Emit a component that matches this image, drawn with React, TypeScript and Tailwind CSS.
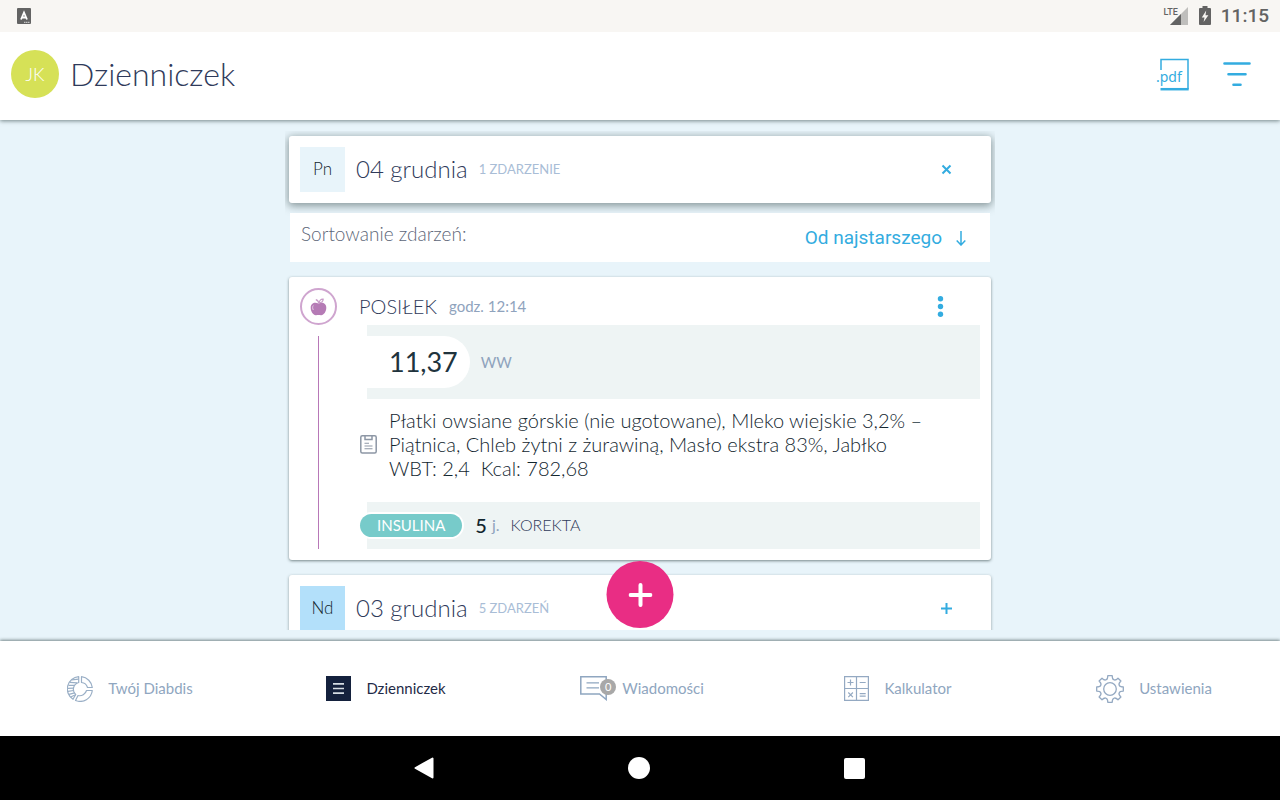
import type { ReactNode } from "react";
import clsx from "clsx";

/* ── Icons ── */
function KeyboardIcon() {
  return (
    <svg width="14" height="16" viewBox="0 0 14 16" aria-hidden="true">
      <rect width="14" height="16" rx="1" fill="#636363" />
      <path d="M4 11.500L7 4.500L10 11.500M5 9.500H9" fill="none" stroke="#fff" strokeWidth="1.800" />
      <path d="M7 14.300H13" stroke="#ddd" strokeWidth="1" strokeDasharray="1.500 .5" />
    </svg>
  );
}

function SignalIcon() {
  return (
    <svg width="18" height="18" viewBox="0 0 18 18" aria-hidden="true">
      <path d="M18 0V18H0Z" fill="#bfbebc" />
      <path d="M11 7V18H0Z" fill="#636363" />
    </svg>
  );
}

function BatteryIcon() {
  return (
    <svg width="12" height="19" viewBox="0 0 12 19" aria-hidden="true">
      <path d="M3.500 0H8.500V2H11Q12 2 12 3V18Q12 19 11 19H1Q0 19 0 18V3Q0 2 1 2H3.500Z" fill="#636363" />
      <path d="M7.200 4.500L2.800 11.500H5.500L4.600 16L9.400 9.200H6.500Z" fill="#f8f6f3" />
    </svg>
  );
}

function PdfIcon() {
  return (
    <svg width="33" height="33" viewBox="0 0 33 33" aria-hidden="true">
      <g fill="none" stroke="#33ace0">
        <path d="M5 12V1.500H32V31" strokeWidth="1.500" />
        <path d="M4.500 31.200H32.700" strokeWidth="2.500" />
      </g>
      <text x="0" y="24" fill="#33ace0" fontFamily="'Noto Sans', sans-serif" fontSize="14">.pdf</text>
    </svg>
  );
}

function FilterIcon() {
  return (
    <svg width="28" height="26" viewBox="0 0 28 26" fill="none" stroke="#33ace0" strokeWidth="2.600" strokeLinecap="round" aria-hidden="true">
      <path d="M1.500 2.500H26.500M5.500 13.200H22.500M10.500 23.700H17.500" />
    </svg>
  );
}

function AppleIcon() {
  return (
    <svg width="17" height="18" viewBox="0 0 17 18" aria-hidden="true">
      <path d="M8.500 5.500C5.500 3.800 .7 4.400 .7 9.800C.7 13.800 3.500 17.500 6 17.200C7.500 16.900 9.500 16.900 11 17.200C13.500 17.500 16.300 13.800 16.300 9.800C16.300 4.400 11.500 3.800 8.500 5.500Z" fill="#b57bb5" />
      <path d="M8.800 5.500C8.600 3.500 7.600 2.200 5.800 1.700M9.200 4.800C9.200 2.600 10.800 1 13.200 1.200C13 3.400 11.500 4.600 9.200 4.800Z" fill="none" stroke="#c89cc8" strokeWidth="1.200" />
      <path d="M3.300 7.500C2.300 8.800 2.600 10.800 3.300 12" fill="none" stroke="#e6cfe6" strokeWidth="1" />
    </svg>
  );
}

function NoteIcon() {
  return (
    <svg width="17" height="19" viewBox="0 0 17 19" fill="none" stroke="#8d97a5" aria-hidden="true">
      <rect x=".8" y=".8" width="15.400" height="17.200" rx="1.500" strokeWidth="1.500" />
      <path d="M5 1V4.500H12V1" strokeWidth="1.500" />
      <path d="M4.500 8.300H9M4.500 11H12.500M4.500 13.700H12.500" strokeWidth="1.100" />
    </svg>
  );
}

function WheelIcon() {
  return (
    <svg width="26" height="26" viewBox="0 0 26 26" fill="none" stroke="#9aafc6" strokeWidth="1.200" strokeLinejoin="round" aria-hidden="true">
      <path d="M14.500 .7A12.300 12.300 0 0 1 25.300 11.500H20.500A7 7 0 0 0 14.500 6.500Z" />
      <path d="M25.300 14.500A12.300 12.300 0 0 1 8.500 24.500L11 19.500A7 7 0 0 0 19.500 14.500Z" />
      <path d="M11.700 .7A12.300 12.300 0 0 0 6 23.300L8.700 18.500A7 7 0 0 1 11.700 6.500Z" />
      <path d="M5 3.800L11.500 3.200M2.800 6.300L10 6.800M1.500 9.300L7.600 9.300M.8 12.300L6.600 12.200M1 15.300L6.600 14.500M1.900 18.300L7.800 16.900M3.700 21L8.500 18.800" />
    </svg>
  );
}

function DiaryIcon() {
  return (
    <svg width="25" height="25" viewBox="0 0 25 25" aria-hidden="true">
      <rect width="25" height="25" fill="#14213d" />
      <path d="M7 7.800H18M7 12.500H18M7 17.200H18" stroke="#d5dde4" strokeWidth="1.700" />
    </svg>
  );
}

function MessageIcon() {
  return (
    <svg width="27" height="25" viewBox="0 0 27 25" fill="none" stroke="#8fa6c0" aria-hidden="true">
      <path d="M.8 .8H26.200V23.500L19.500 18H.8Z" strokeWidth="1.500" />
      <path d="M6.500 6.800H19M6.500 11.800H19" strokeWidth="1.300" />
    </svg>
  );
}

function CalculatorIcon() {
  return (
    <svg width="25" height="25" viewBox="0 0 25 25" fill="none" stroke="#94a9c2" strokeWidth="1.200" aria-hidden="true">
      <path d="M.6 .6H24.400V24.400H.6ZM12.500 .6V24.400M.6 12.500H24.400" />
      <path d="M3.500 6.500H9.500M6.500 3.500V9.500M15.700 6.500H21.700M4.300 16.500L8.900 21.100M8.900 16.500L4.300 21.100M15.700 17.600H21.700M15.700 20.200H21.700" />
    </svg>
  );
}

function GearIcon() {
  return (
    <svg width="28" height="28" viewBox="0 0 28 28" fill="none" stroke="#94a9c2" strokeWidth="1.300" strokeLinejoin="round" aria-hidden="true">
      <circle cx="14" cy="14" r="6.300" />
      <path d="M11.800 .7H16.200Q16.300 4.300 17.800 4.700Q19.600 5.700 22 3.200L24.900 6Q22.300 8.500 23.200 10.200Q23.700 11.800 27.300 11.900V16.100Q23.700 16.200 23.200 17.800Q22.300 19.500 24.900 22L22 24.800Q19.600 22.300 17.800 23.300Q16.300 23.700 16.200 27.300H11.800Q11.700 23.700 10.200 23.300Q8.400 22.300 6 24.800L3.100 22Q5.700 19.500 4.800 17.800Q4.300 16.200 .7 16.100V11.900Q4.300 11.800 4.800 10.200Q5.700 8.500 3.100 6L6 3.200Q8.400 5.700 10.200 4.700Q11.700 4.300 11.800 .7Z" />
    </svg>
  );
}

/* ── Day header card ── */
interface DayCardProps {
  day: string;
  date: string;
  count: string;
  open?: boolean;
}

function DayCard({ day, date, count, open }: DayCardProps) {
  return (
    <section
      className={clsx(
        "flex shrink-0 items-center rounded-[3px] bg-white p-[11px]",
        open ? "shadow-[0_2px_8px_1px_rgba(40,60,60,0.5)]" : "shadow-[0_1px_3px_rgba(40,60,60,0.5)]"
      )}
    >
      <span
        className={clsx(
          "flex size-[45px] items-center justify-center pb-[2px] text-[17px] font-light text-[#12262f]",
          open ? "bg-[#e8f4fa]" : "bg-[#b3e0fa]"
        )}
      >
        {day}
      </span>
      <h2 className="ml-[11px] pb-[2px] text-2xl font-light text-[#2f3a5a]">{date}</h2>
      <span className="ml-[11px] text-[13px] text-[#a9bdd6]">{count}</span>
      <button type="button" aria-label={open ? "Zwiń" : "Rozwiń"} aria-expanded={!!open} className="mr-[27px] ml-auto p-[1px]">
        <svg width="11" height="11" viewBox="0 0 11 11" stroke="#33ace0" strokeWidth="2" aria-hidden="true">
          <path d={open ? "M1.500 1.500L9.500 9.500M9.500 1.500L1.500 9.500" : "M0 5.500H11M5.500 0V11"} />
        </svg>
      </button>
    </section>
  );
}

/* ── Meal entry ── */
function MealCard() {
  return (
    <article className="my-[15px] flex shrink-0 rounded-[3px] bg-white p-[11px] shadow-[0_1px_3px_rgba(40,60,60,0.6)]">
      <div className="flex w-[37px] shrink-0 flex-col items-center">
        <span className="flex size-[37px] items-center justify-center rounded-full border-2 border-[#cfa5cf]">
          <AppleIcon />
        </span>
        <span className="mt-[11px] w-px flex-1 bg-[#b878b8]" />
      </div>

      <div className="ml-[22px] min-w-0 flex-1">
        <div className="flex h-[37px] items-center">
          <h3 className="pb-[2px] text-xl font-light text-[#2f3a5a]">POSIŁEK</h3>
          <span className="ml-3 text-[15px] text-[#8fa3bd]">godz. 12:14</span>
          <button type="button" aria-label="Więcej" className="mr-9 ml-auto">
            <svg width="7" height="21" viewBox="0 0 7 21" fill="#33ace0" aria-hidden="true">
              <circle cx="3.500" cy="2.700" r="2.700" />
              <circle cx="3.500" cy="10.500" r="2.700" />
              <circle cx="3.500" cy="18.300" r="2.700" />
            </svg>
          </button>
        </div>

        <div className="ml-2 flex h-[74px] items-center bg-[#eef4f4]">
          <span className="flex h-[52px] items-center rounded-r-full bg-white pr-3 pl-[22px] text-[27px] text-[#20333d]">11,37</span>
          <span className="ml-[11px] text-[15px] text-[#8fa3bd]">WW</span>
        </div>

        <div className="flex items-center pt-[9px] pb-[22px] pl-px">
          <NoteIcon />
          <p className="ml-3 max-w-[560px] text-xl leading-6 font-light text-[#12262f]">
            Płatki owsiane górskie (nie ugotowane), Mleko wiejskie 3,2% – Piątnica, Chleb żytni z żurawiną, Masło ekstra 83%, Jabłko
            <br />
            WBT: 2,4&nbsp; Kcal: 782,68
          </p>
        </div>

        <div className="ml-2 flex h-[47px] items-center bg-[#eef4f4]">
          <span className="-ml-[7px] flex h-[23px] items-center rounded-full bg-[#77cbca] px-[17px] text-[15px] text-white ring-2 ring-white">INSULINA</span>
          <span className="ml-[13px] pb-[2px] text-xl font-medium text-[#12262f]">5</span>
          <span className="ml-[5px] pb-[2px] text-base text-[#8fa3bd]">j.</span>
          <span className="ml-[11px] pb-[2px] text-base font-light text-[#2f3a5a]">KOREKTA</span>
        </div>
      </div>
    </article>
  );
}

/* ── Bottom navigation item ── */
interface NavItemProps {
  label: string;
  icon: ReactNode;
  active?: boolean;
  badge?: string;
}

function NavItem({ label, icon, active, badge }: NavItemProps) {
  return (
    <a
      href="#"
      aria-current={active ? "page" : undefined}
      className={clsx("flex flex-1 items-center justify-center gap-[15px] pl-1 text-[15px]", active ? "text-[#1f2b47]" : "text-[#8fa6c0]")}
    >
      <span className="relative">
        {icon}
        {badge && (
          <span className="absolute top-[3px] -right-[9px] flex size-4 items-center justify-center rounded-full bg-[#a8a8a8] text-[11px] text-white">
            {badge}
          </span>
        )}
      </span>
      {label}
    </a>
  );
}

export default function App() {
  return (
    <div className="flex h-screen flex-col bg-[#e8f4fa] font-[Lato,sans-serif]">
      <div className="z-20 flex h-8 shrink-0 items-center bg-[#f8f6f3] pr-[11px] pl-[17px] font-[Roboto,sans-serif] text-[#636363]">
        <KeyboardIcon />
        <span className="ml-auto self-start pt-[6px] text-[9px] leading-3 font-medium">LTE</span>
        <span className="-ml-2">
          <SignalIcon />
        </span>
        <span className="ml-[11px] pb-px">
          <BatteryIcon />
        </span>
        <span className="ml-[10px] text-[19px] font-medium">11:15</span>
      </div>

      <header className="z-10 flex h-[88px] shrink-0 items-center bg-white pr-[29px] pb-1 pl-[11px] shadow-[0_1px_4px_rgba(40,60,60,0.6)]">
        <span className="flex size-12 items-center justify-center rounded-full bg-[#d6e157] text-lg font-light text-white">JK</span>
        <h1 className="ml-[11px] text-[32px] font-light text-[#2f3a5a]">Dzienniczek</h1>
        <button type="button" aria-label="Eksportuj .pdf" className="ml-auto">
          <PdfIcon />
        </button>
        <button type="button" aria-label="Filtruj" className="ml-[34px]">
          <FilterIcon />
        </button>
      </header>

      <main className="relative flex min-h-0 flex-1 flex-col pt-[11px] pb-[11px]">
        <div className="mx-auto flex min-h-0 w-full max-w-[710px] flex-1 flex-col overflow-y-auto px-1 pt-[5px] [scrollbar-width:none]">
          <DayCard day="Pn" date="04 grudnia" count="1 ZDARZENIE" open />
          <div className="relative mx-px mt-[10px] flex h-[49px] shrink-0 justify-between bg-white pr-6 pl-[11px]">
            <span className="pt-[7px] text-[19px] font-light text-[#5d6678]">Sortowanie zdarzeń:</span>
            <button type="button" className="flex items-center gap-[14px] pt-[2px] font-[Roboto,sans-serif] text-[19px] text-[#33ace0]">
              Od najstarszego
              <svg width="10" height="15" viewBox="0 0 10 15" fill="none" stroke="#33ace0" strokeWidth="1.500" aria-hidden="true">
                <path d="M5 0V14M.7 9.500L5 14L9.300 9.500" />
              </svg>
            </button>
          </div>
          <MealCard />
          <DayCard day="Nd" date="03 grudnia" count="5 ZDARZEŃ" />
        </div>

        <button
          type="button"
          aria-label="Dodaj zdarzenie"
          className="absolute bottom-[13px] left-1/2 flex size-[67px] -translate-x-1/2 items-center justify-center rounded-full bg-[#e92d84]"
        >
          <svg width="24" height="24" viewBox="0 0 24 24" stroke="#fff" strokeWidth="4" strokeLinecap="round" aria-hidden="true">
            <path d="M2 12H22M12 2V22" />
          </svg>
        </button>
      </main>

      <nav className="z-10 flex h-[95px] shrink-0 bg-white shadow-[0_-1px_3px_rgba(40,60,60,0.6)]">
        <NavItem label="Twój Diabdis" icon={<WheelIcon />} />
        <NavItem label="Dzienniczek" icon={<DiaryIcon />} active />
        <NavItem label="Wiadomości" icon={<MessageIcon />} badge="0" />
        <NavItem label="Kalkulator" icon={<CalculatorIcon />} />
        <NavItem label="Ustawienia" icon={<GearIcon />} />
      </nav>

      <div className="z-10 flex h-16 shrink-0 items-center justify-center gap-[194px] bg-black pr-[2px]">
        <button type="button" aria-label="Wstecz">
          <svg width="20" height="22" viewBox="0 0 20 22" fill="#fff" stroke="#fff" strokeWidth="2" strokeLinejoin="round" aria-hidden="true">
            <path d="M18.500 1.500V20.500L1.500 11Z" />
          </svg>
        </button>
        <button type="button" aria-label="Ekran główny" className="size-[22px] rounded-full bg-white" />
        <button type="button" aria-label="Ostatnie aplikacje" className="size-[21px] rounded-[2px] bg-white" />
      </div>
    </div>
  );
}
